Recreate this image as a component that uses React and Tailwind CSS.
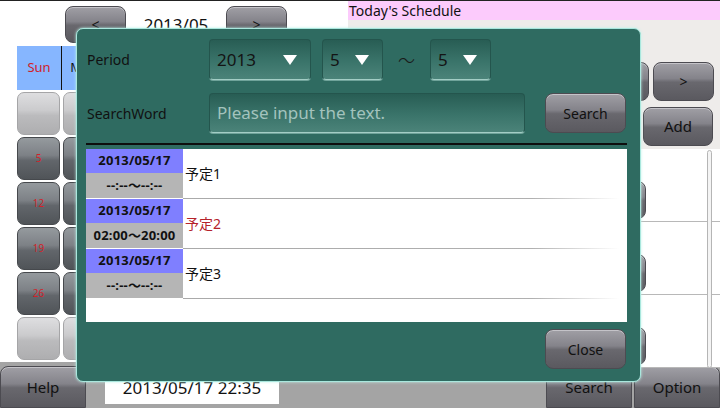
import React from "react";

const darkBtn =
  "bg-[linear-gradient(to_bottom,#a09fa5_0%,#84838a_42%,#69686e_52%,#5a595f_100%)] border border-[#4c4b51] rounded-[8px] shadow-[inset_0_1px_0_#c4c3c8] flex items-center justify-center text-[#111] text-[14px]";
const calDark =
  "bg-[linear-gradient(to_bottom,#959a9e_0%,#7d8186_42%,#62666b_55%,#505458_100%)] border border-[#46494d] rounded-[7px] flex items-center justify-center text-[#d0222a] text-[10px]";
const calLight =
  "bg-[linear-gradient(to_bottom,#dedee0_0%,#cbcbcd_42%,#bbbbbd_55%,#aeaeb0_100%)] border border-[#a5a5a7] rounded-[7px]";
const fieldCls =
  "bg-[linear-gradient(to_bottom,#285d54_0%,#3a746a_55%,#4b8379_100%)] border border-[#24554d] border-b-[#a3cdc5] rounded-[4px] shadow-[0_1px_0_#6fa39a]";

function Triangle() {
  return (
    <svg width="14" height="10" viewBox="0 0 14 10">
      <polygon points="0,0 14,0 7,10" fill="#ffffff" />
    </svg>
  );
}

function Select({ value, w }) {
  return (
    <div className={`${fieldCls} ${w} h-[41px] flex items-center justify-between pl-[7px] pr-[13px] text-[17px] text-[#141414]`}>
      <span>{value}</span>
      <Triangle />
    </div>
  );
}

const days = ["Sun", "Mon", "Tue", "Wed", "Thu", "Fri", "Sat"];
const weeks = [
  [null, null, null, 1, 2, 3, 4],
  [5, 6, 7, 8, 9, 10, 11],
  [12, 13, 14, 15, 16, 17, 18],
  [19, 20, 21, 22, 23, 24, 25],
  [26, 27, 28, 29, 30, 31, null],
  [null, null, null, null, null, null, null],
];

const items = [
  { date: "2013/05/17", time: "--:--～--:--", title: "予定1", red: false },
  { date: "2013/05/17", time: "02:00～20:00", title: "予定2", red: true },
  { date: "2013/05/17", time: "--:--～--:--", title: "予定3", red: false },
];

export default function App() {
  return (
    <div className="relative w-[720px] h-[408px] overflow-hidden bg-white border-t border-[#222] flex flex-col font-['Noto_Sans','Noto_Sans_CJK_JP',sans-serif]">
      {/* main area */}
      <div className="flex h-[361px]">
        {/* left: calendar */}
        <div className="w-[348px] bg-white flex flex-col">
          <div className="flex items-center h-[37px] mt-[5px]">
            <div className={`${darkBtn} w-[61px] h-[37px] ml-[65px]`}>&lt;</div>
            <div className="w-[100px] text-center text-[17px] text-[#111]">2013/05</div>
            <div className={`${darkBtn} w-[61px] h-[37px]`}>&gt;</div>
          </div>
          <div className="flex ml-[17px] mt-[3px] h-[44px]">
            {days.map((d, i) => (
              <div
                key={d}
                className={`w-[45px] h-[44px] bg-[#86b6ff] border-r border-[#111] flex items-center justify-center text-[13px] ${i === 0 ? "text-[#d0222a]" : "text-[#111]"}`}
              >
                {d}
              </div>
            ))}
          </div>
          <div className="grid grid-cols-[repeat(7,43px)] grid-rows-[repeat(6,43px)] gap-x-[3px] gap-y-[2px] ml-[17px] mt-[2px]">
            {weeks.flat().map((n, i) =>
              n === null ? (
                <div key={i} className={calLight} />
              ) : (
                <div key={i} className={calDark}>
                  <span className={i % 7 === 0 ? "text-[#d0222a]" : "text-[#222]"}>{n}</span>
                </div>
              )
            )}
          </div>
        </div>

        {/* right: schedule */}
        <div className="flex-1 bg-[#eeecea] flex flex-col">
          <div className="h-[19px] bg-[#fccbfc] text-[14px] leading-[19px] pl-[1px] text-[#111]">Today's Schedule</div>
          <div className="flex justify-end gap-[4px] pr-[6px] mt-[42px]">
            <div className={`${darkBtn} w-[61px] h-[39px]`}>&lt;</div>
            <div className={`${darkBtn} w-[61px] h-[39px]`}>&gt;</div>
          </div>
          <div className="h-[20px] bg-[#80ffff] mt-[3px]" />
          <div className="flex justify-end pr-[7px] mt-[3px]">
            <div className={`${darkBtn} w-[70px] h-[39px] text-[15px]`}>Add</div>
          </div>
          <div className="relative flex-1 mt-[3px] bg-white flex flex-col">
            {[0, 1, 2].map((r) => (
              <div key={r} className="h-[73px] shrink-0 border-b border-[#b8b8b8] flex items-start pl-[230px]">
                <div className={`${darkBtn} w-[68px] h-[38px] mt-[32px]`}>Edit</div>
              </div>
            ))}
            <div className="absolute right-[8px] top-[1px] bottom-0 w-[5px] rounded-[3px] border border-[#b5b5b5] bg-[#f4f4f4]" />
          </div>
        </div>
      </div>

      {/* bottom bar */}
      <div className="flex-1 bg-[#a4a4a4] flex items-end">
        <div className={`${darkBtn} w-[86px] h-[42px] text-[15px] rounded-b-none`}>Help</div>
        <div className="ml-[19px] mb-[4px] w-[174px] h-[32px] bg-white flex items-center justify-center text-[17px] text-[#111]">
          2013/05/17 22:35
        </div>
        <div className="flex-1" />
        <div className={`${darkBtn} w-[86px] h-[42px] text-[15px] rounded-b-none`}>Search</div>
        <div className={`${darkBtn} w-[86px] h-[42px] text-[15px] rounded-b-none ml-[2px]`}>Option</div>
      </div>

      {/* dialog overlay */}
      <div className="absolute left-[76px] top-[27px] w-[565px] h-[354px] rounded-[7px] bg-[#2f6b61] border border-[#a9e7dd] shadow-[0_0_3px_#bff3ea] flex flex-col">
        <div className="flex items-center mt-[10px] pl-[10px]">
          <div className="w-[122px] text-[14px] text-[#111]">Period</div>
          <Select value="2013" w="w-[102px]" />
          <div className="w-[11px]" />
          <Select value="5" w="w-[61px]" />
          <div className="w-[47px] text-center text-[17px] text-[#1a1a1a] font-['Noto_Sans_CJK_JP',sans-serif] font-light">～</div>
          <Select value="5" w="w-[61px]" />
        </div>
        <div className="flex items-center mt-[13px] pl-[10px]">
          <div className="w-[122px] text-[14px] text-[#111]">SearchWord</div>
          <div className={`${fieldCls} w-[316px] h-[40px] flex items-center pl-[7px] text-[17px] text-[#a3c3bd]`}>
            Please input the text.
          </div>
          <div className={`${darkBtn} w-[81px] h-[40px] ml-[20px]`}>Search</div>
        </div>
        <div className="ml-[9px] w-[541px] h-[2px] bg-[#0e0e0e] mt-[10px]" />
        <div className="ml-[9px] w-[541px] h-[173px] mt-[4px] bg-white flex flex-col">
          {items.map((it, i) => (
            <div key={i} className="flex flex-col">
              <div className="flex h-[49px]">
                <div className="w-[97px] flex flex-col text-[13px] font-bold text-[#111] tracking-[0.2px]">
                  <div className="h-[24px] bg-[#7f7fff] flex items-center justify-center">{it.date}</div>
                  <div className="h-[25px] bg-[#b5b5b5] flex items-center justify-center">{it.time}</div>
                </div>
                <div className={`flex items-center pl-[2px] text-[14px] ${it.red ? "text-[#b5222a]" : "text-[#111]"}`}>
                  {it.title}
                </div>
              </div>
              <div className="h-[1px] ml-[97px] mr-[8px] bg-[linear-gradient(to_right,#a9a9a9_0%,#b0b0b0_80%,rgba(255,255,255,0)_100%)]" />
            </div>
          ))}
        </div>
        <div className="flex justify-end pr-[14px] mt-[7px]">
          <div className={`${darkBtn} w-[81px] h-[40px]`}>Close</div>
        </div>
      </div>
    </div>
  );
}
